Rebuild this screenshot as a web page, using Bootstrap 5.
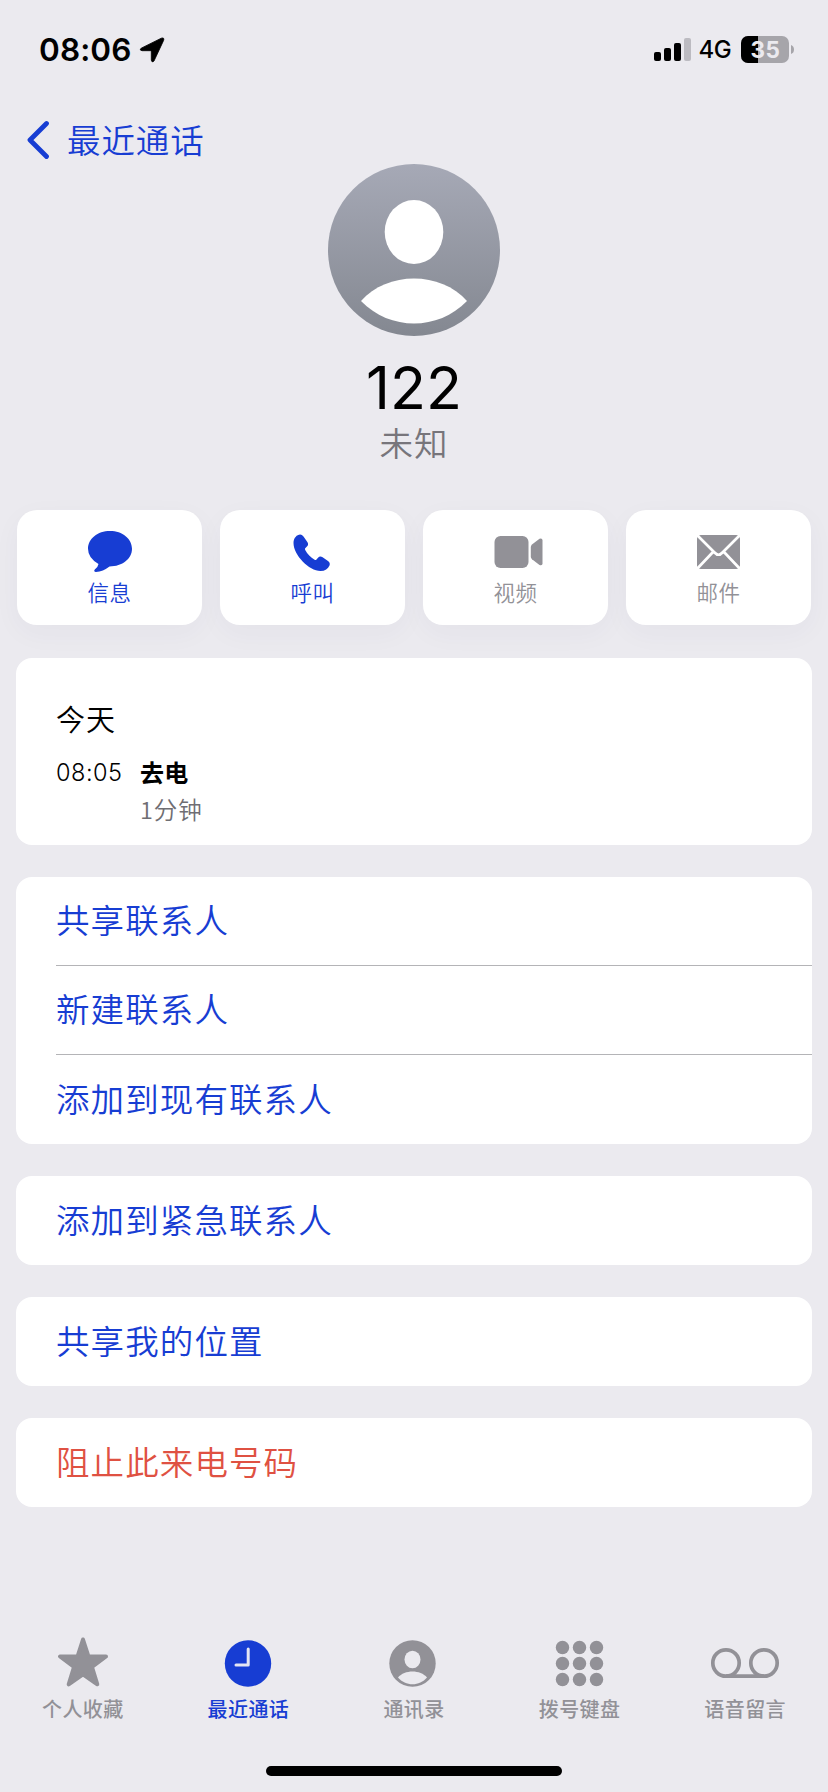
<!DOCTYPE html>
<html lang="zh-CN">
<head>
<meta charset="utf-8">
<meta name="viewport" content="width=device-width, initial-scale=1">
<title>最近通话</title>
<link href="https://cdn.jsdelivr.net/npm/bootstrap@5.3.0/dist/css/bootstrap.min.css" rel="stylesheet">
<style>
:root{--ink-blue:#173dd3;--ink-gray:#929197}
body{background:#ebeaef;color:#000;font-family:"Noto Sans CJK SC",sans-serif;font-weight:350;height:1792px;overflow:hidden}
svg{display:block;flex:none}
.latin{font-family:Inter,"Noto Sans CJK SC",sans-serif}
.tone-blue{color:var(--ink-blue)}
.tone-gray{color:var(--ink-gray)}
.status{height:100px;padding:0 33px 0 39px}
.clock{font-size:31.5px;font-weight:600;line-height:40px;letter-spacing:.1px}
.net{font-size:24px;font-weight:500;line-height:30px;letter-spacing:-.6px;margin-left:7px}
.back{height:64px;padding:16px 0 0 27px;font-size:33.5px;line-height:44px;letter-spacing:.9px}
.back span{margin-left:16px;padding-bottom:3px}
.who{height:346px}
.number{font-size:59px;line-height:70px;margin-top:17px}
.sub{font-size:33.5px;line-height:44px;letter-spacing:1px;color:#77757b;margin-top:-3px}
.actions{padding:0 17px;gap:18px}
.action{height:115px;border:0;border-radius:20px;box-shadow:0 8px 28px rgba(60,60,90,.04);font-size:21.5px;line-height:30px;letter-spacing:.4px;padding-top:17px}
.action svg{height:50px;width:60px}
.stack{padding:33px 16px 0;gap:32px}
.panel{border:0;border-radius:16px;overflow:hidden;background:#fff}
.history{height:187px;padding:41px 0 0 40px}
.day{font-size:29px;line-height:38px;letter-spacing:1px}
.call-line{margin-top:18px}
.time{font-size:23.5px;line-height:34px;width:84px;letter-spacing:.5px;padding-top:1px}
.kind{font-size:24px;font-weight:700;line-height:34px;letter-spacing:.3px}
.dur{font-size:23.5px;line-height:34px;letter-spacing:.9px;color:#6f6e73;padding-left:84px;margin-top:2px}
.entry{height:89px;margin-left:40px;font-size:33.5px;letter-spacing:1.1px;line-height:44px;padding:0 0 4px}
.ruled{border-bottom:1px solid #b4b4b7}
.tone-red{color:#df5142}
.tabs{height:155px;margin-top:104px}
.tab{font-size:20px;line-height:28px;letter-spacing:.4px;font-weight:500}
.tab svg{width:80px;height:64px;margin-top:20px}
.homebar{width:296px;height:10px;border-radius:5px;background:#000}
</style>
</head>
<body>
<header class="status d-flex justify-content-between align-items-center">
  <div class="d-flex align-items-center gap-2">
    <span class="clock latin">08:06</span>
    <svg width="26" height="26" viewBox="0 0 26 26"><path d="M2.200 11.200 22.300 1.200Q25.600.2 24.600 3.400L15 24Q13 26.200 12.300 23.200V14.600L11.400 13.700H3Q-.2 13 2.200 11.200Z" stroke="#000" stroke-width=".8"/></svg>
  </div>
  <div class="d-flex align-items-center">
    <svg width="38" height="24" viewBox="0 0 38 24"><rect y="14" width="7" height="9" rx="2"/><rect x="10" y="10" width="7" height="13" rx="2"/><rect x="20" y="5" width="7" height="18" rx="2"/><rect x="30" width="7" height="23" rx="2" fill="#bcbbc1"/></svg>
    <span class="net latin">4G</span>
    <svg style="margin-left:10px" width="54" height="28" viewBox="0 0 54 28"><defs><clipPath id="cell"><rect width="48" height="27" rx="7"/></clipPath></defs><g clip-path="url(#cell)"><rect width="48" height="27" fill="#a6a5aa"/><rect width="17" height="27"/></g><path d="M50 9Q53 10 53 13.500T50 18Z" fill="#a6a5aa"/><text x="24.500" y="21.600" text-anchor="middle" font-family="Inter" font-weight="700" font-size="22.500" letter-spacing=".6" fill="#ebeaef">35</text></svg>
  </div>
</header>

<nav class="back tone-blue d-flex align-items-center">
  <svg width="24" height="40" viewBox="0 0 24 40"><path d="M19.500 3.500 3 20l16.500 16.500" fill="none" stroke="currentColor" stroke-width="4.800" stroke-linecap="round" stroke-linejoin="round"/></svg>
  <span>最近通话</span>
</nav>

<section class="who d-flex flex-column align-items-center">
  <svg width="172" height="172" viewBox="0 0 172 172"><defs><linearGradient id="sky" x2="0" y2="1"><stop stop-color="#a6a9b6"/><stop offset="1" stop-color="#848891"/></linearGradient></defs><circle cx="86" cy="86" r="86" fill="url(#sky)"/><ellipse cx="86" cy="68" rx="29.300" ry="32" fill="#fff"/><path d="M33 137C59 107 113 107 139 137C110 167 62 167 33 137Z" fill="#fff"/></svg>
  <h1 class="number latin fw-normal mb-0">122</h1>
  <div class="sub">未知</div>
</section>

<section class="actions d-flex">
  <div class="card action flex-fill w-100 align-items-center tone-blue">
    <svg viewBox="0 0 60 50"><path d="M30 4C42.500 4 52 11.800 52 21.800S42.500 39.500 29.500 39.500Q23 44.500 16 45Q13 44.500 15 42.200Q18 40 18.500 37Q8 31 8 21.800C8 11.800 17.500 4 30 4Z" fill="currentColor"/></svg>信息
  </div>
  <div class="card action flex-fill w-100 align-items-center tone-blue">
    <svg viewBox="0 0 60 50"><path d="M10.500 16C10.500 11 14 7.500 17.200 7.500Q19 7.500 20.500 9.500L24.500 15.300Q26 18 23.700 19.800L22.200 21.200Q21.700 22 22.200 23C24.500 27.300 27.500 30.400 31.600 32.800Q32.700 33.400 33.500 32.500L35 30.700Q37 28.600 39.600 30.300L45 34Q47.500 35.800 46.500 38.500C45 42 42 44 37.500 44C26 44 10.500 28 10.500 16Z" fill="currentColor"/></svg>呼叫
  </div>
  <div class="card action flex-fill w-100 align-items-center tone-gray">
    <svg viewBox="0 0 60 50"><rect x="8.500" y="9" width="34" height="32" rx="6" fill="currentColor"/><path d="M44.800 20Q44.800 18.500 46 17.500L53.500 11.700Q56.500 10.800 56.500 13.500V36.500Q56.500 39 53.500 38L46 32.200Q44.800 31 44.800 30Z" fill="currentColor"/></svg>视频
  </div>
  <div class="card action flex-fill w-100 align-items-center tone-gray">
    <svg viewBox="0 0 60 50"><rect x="8" y="8" width="43" height="34" rx="4" fill="currentColor"/><path d="M7 7 25.500 25.500Q29.500 30 33.500 25.500L52 7M7 43 24 25M52 43 35 25" fill="none" stroke="#fff" stroke-width="2.700"/></svg>邮件
  </div>
</section>

<main class="stack d-flex flex-column">
  <section class="panel history">
    <div class="day">今天</div>
    <div class="call-line d-flex"><span class="time latin">08:05</span><span class="kind">去电</span></div>
    <div class="dur">1分钟</div>
  </section>
  <div class="panel tone-blue">
    <div class="entry ruled d-flex align-items-center">共享联系人</div>
    <div class="entry ruled d-flex align-items-center">新建联系人</div>
    <div class="entry d-flex align-items-center">添加到现有联系人</div>
  </div>
  <div class="panel tone-blue"><div class="entry d-flex align-items-center">添加到紧急联系人</div></div>
  <div class="panel tone-blue"><div class="entry d-flex align-items-center">共享我的位置</div></div>
  <div class="panel tone-red"><div class="entry d-flex align-items-center">阻止此来电号码</div></div>
</main>

<footer>
  <nav class="tabs row row-cols-5 g-0 tone-gray text-center">
    <div class="tab col d-flex flex-column align-items-center"><svg viewBox="0 0 80 64"><path d="M40 8.500 45.500 25.500H63L49 36 54.300 53.300 40 43.300 25.700 53.300 31 36 17 25.500H34.500Z" fill="currentColor" stroke="currentColor" stroke-width="4" stroke-linejoin="round"/></svg>个人收藏</div>
    <div class="tab col d-flex flex-column align-items-center tone-blue"><svg viewBox="0 0 80 64"><circle cx="40" cy="32.500" r="23.200" fill="currentColor"/><path d="M40.200 18V34H28" fill="none" stroke="#e4e5f3" stroke-width="3" stroke-linecap="round" stroke-linejoin="round"/></svg>最近通话</div>
    <div class="tab col d-flex flex-column align-items-center"><svg viewBox="0 0 80 64"><circle cx="38.500" cy="32.500" r="23.200" fill="currentColor"/><ellipse cx="38.500" cy="28.500" rx="8" ry="8.800" fill="#ebeaef"/><path d="M24 46.500C30.500 38.500 46.500 38.500 53 46.500C45.500 55.500 31.500 55.500 24 46.500Z" fill="#ebeaef"/></svg>通讯录</div>
    <div class="tab col d-flex flex-column align-items-center"><svg viewBox="0 0 80 64" fill="currentColor"><circle cx="22.500" cy="16.500" r="6.700"/><circle cx="39.500" cy="16.500" r="6.700"/><circle cx="56.500" cy="16.500" r="6.700"/><circle cx="22.500" cy="32.500" r="6.700"/><circle cx="39.500" cy="32.500" r="6.700"/><circle cx="56.500" cy="32.500" r="6.700"/><circle cx="22.500" cy="48.500" r="6.700"/><circle cx="39.500" cy="48.500" r="6.700"/><circle cx="56.500" cy="48.500" r="6.700"/></svg>拨号键盘</div>
    <div class="tab col d-flex flex-column align-items-center"><svg viewBox="0 0 80 64" fill="none" stroke="currentColor" stroke-width="3.700"><circle cx="21" cy="32" r="13.200"/><circle cx="59" cy="32" r="13.200"/><path d="M21 45.200H59"/></svg>语音留言</div>
  </nav>
  <div class="homebar mx-auto"></div>
</footer>
<script src="https://cdn.jsdelivr.net/npm/bootstrap@5.3.0/dist/js/bootstrap.bundle.min.js"></script>
</body>
</html>
